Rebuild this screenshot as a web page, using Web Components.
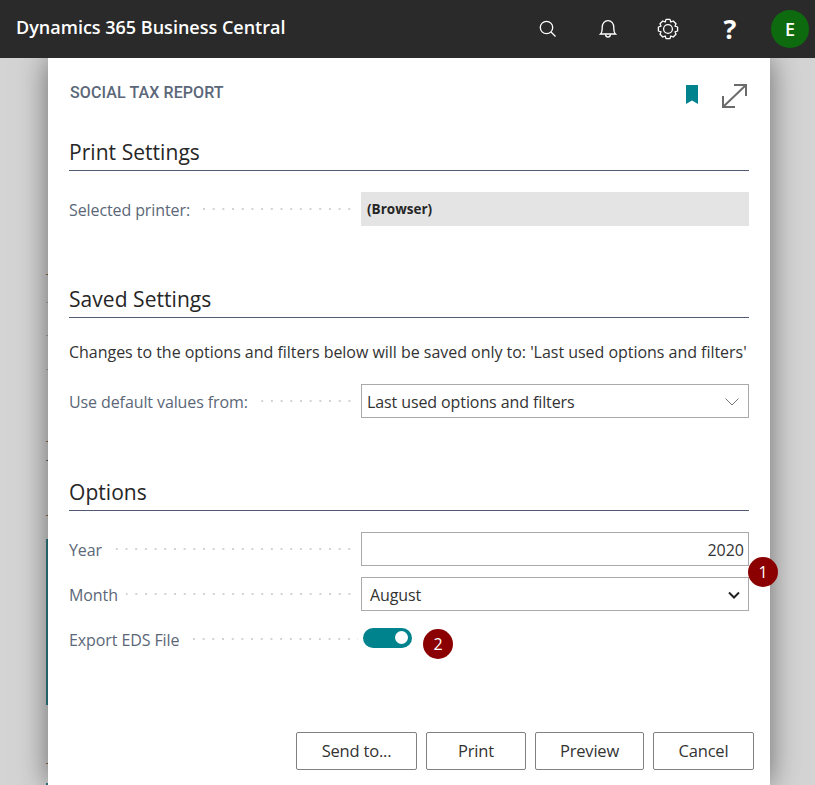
<!DOCTYPE html>
<html lang="en">
<head>
<meta charset="utf-8">
<title>Social Tax Report</title>
<style>
    html, body { margin: 0; height: 100%; }
    body {
        background: #d4d4d4;
        overflow: hidden;
        font-family: "Open Sans", "Noto Sans", sans-serif;
        color: #333;
    }
</style>
</head>
<body>
<bc-header>Dynamics 365 Business Central</bc-header>
<bc-backdrop></bc-backdrop>
<bc-dialog heading="SOCIAL TAX REPORT">
    <bc-section heading="Print Settings">
        <bc-field label="Selected printer:"><bc-readonly>(Browser)</bc-readonly></bc-field>
    </bc-section>
    <bc-section heading="Saved Settings" style="margin-bottom:56px">
        <p slot="intro">Changes to the options and filters below will be saved only to: 'Last used options and filters'</p>
        <bc-field label="Use default values from:"><bc-select kind="light" pad="6">Last used options and filters</bc-select></bc-field>
    </bc-section>
    <bc-section heading="Options">
        <bc-field label="Year"><bc-input>2020</bc-input></bc-field>
        <bc-field label="Month"><bc-select kind="dark" pad="9">August</bc-select></bc-field>
        <bc-field label="Export EDS File"><bc-toggle></bc-toggle></bc-field>
    </bc-section>
    <bc-button slot="actions" w="121">Send to...</bc-button>
    <bc-button slot="actions" w="100">Print</bc-button>
    <bc-button slot="actions" w="109">Preview</bc-button>
    <bc-button slot="actions" w="101">Cancel</bc-button>
</bc-dialog>
<bc-badge style="left:748px;top:557px">1</bc-badge>
<bc-badge style="left:423px;top:629px">2</bc-badge>

<script>
class BcHeader extends HTMLElement {
    constructor() {
        super();
        this.attachShadow({ mode: 'open' });
    }

    connectedCallback() {
        this.shadowRoot.innerHTML = `
            <style>
                :host {
                    display: flex;
                    align-items: center;
                    position: relative;
                    z-index: 3;
                    height: 58px;
                    padding: 0 6px 0 16px;
                    background: #2a2a2a;
                    color: #fff;
                }
                .title {
                    flex: 1;
                    font-size: 18px;
                    font-weight: 600;
                    margin-top: -4px;
                }
                .icons { display: flex; align-items: center; }
                svg { display: block; fill: none; stroke: #fff; stroke-width: 1.3; }
                .q {
                    width: 20px;
                    margin: -2px 31px 0 41px;
                    text-align: center;
                    font: 700 27px "Open Sans", sans-serif;
                }
                .avatar {
                    width: 38px;
                    height: 38px;
                    border-radius: 50%;
                    background: #0e6a0e;
                    font-size: 18px;
                    font-weight: 600;
                    line-height: 38px;
                    text-align: center;
                }
            </style>
            <div class="title"><slot></slot></div>
            <div class="icons">
                <svg width="20" height="20" viewBox="0 0 20 20" style="margin-right:41px">
                    <circle cx="8.5" cy="8.5" r="6.2"/><path d="M13 13 L17.5 17.5"/>
                </svg>
                <svg width="18" height="20" viewBox="0 0 18 20" style="margin-right:40px">
                    <path d="M1.5 15 C3.4 13.4 3.2 11 3.2 8.5 C3.2 4.6 5.4 1.6 9 1.6 C12.6 1.6 14.8 4.6 14.8 8.5 C14.8 11 14.6 13.4 16.5 15 Z"/>
                    <path d="M6.6 15.4 C6.8 19 11.2 19 11.4 15.4"/>
                </svg>
                <svg width="22" height="22" viewBox="0 0 22 22">
                    <circle cx="11" cy="11" r="4.4"/>
                    <path d="M9 1.4 H13 L13.8 4 L16.2 3 L19 5.8 L18 8.2 L20.6 9 V13 L18 13.8 L19 16.2 L16.2 19 L13.8 18 L13 20.6 H9 L8.2 18 L5.8 19 L3 16.2 L4 13.8 L1.4 13 V9 L4 8.2 L3 5.8 L5.8 3 L8.2 4 Z" stroke-linejoin="round"/>
                </svg>
                <div class="q">?</div>
                <div class="avatar">E</div>
            </div>
        `;
    }
}

// what shows of the page behind the dialog
class BcBackdrop extends HTMLElement {
    constructor() {
        super();
        this.attachShadow({ mode: 'open' });
    }

    connectedCallback() {
        const specks = [[274, '#8a6a3a'], [302, '#a8a8a8'], [335, '#a8a8a8'], [369, '#a8a8a8'], [441, '#8a6a3a'], [460, '#667'], [515, '#8a6a3a'], [763, '#8a6a3a']];
        this.shadowRoot.innerHTML = `
            <style>
                :host { position: absolute; left: 46px; top: 0; width: 2px; height: 785px; }
                i { position: absolute; left: 0; width: 2px; height: 1px; }
                .bar { top: 539px; height: 166px; background: #2f7f86; }
                .low { top: 783px; height: 2px; background: #2f7f86; }
            </style>
            <i class="bar"></i><i class="low"></i>
            ${specks.map(s => `<i style="top:${s[0]}px;background:${s[1]}"></i>`).join('')}
        `;
    }
}

class BcDialog extends HTMLElement {
    constructor() {
        super();
        this.attachShadow({ mode: 'open' });
    }

    connectedCallback() {
        this.shadowRoot.innerHTML = `
            <style>
                :host {
                    display: flex;
                    flex-direction: column;
                    position: relative;
                    z-index: 2;
                    box-sizing: border-box;
                    width: 722px;
                    height: 727px;
                    margin-left: 48px;
                    padding: 22px 21px 15px 21px;
                    background: #fff;
                    box-shadow: 0 0 28px rgba(0, 0, 0, 0.5);
                }
                .top {
                    display: flex;
                    align-items: center;
                    height: 24px;
                    margin-bottom: 30px;
                }
                h1 {
                    flex: 1;
                    margin: 1px 0 0 1px;
                    font: 500 16px Roboto, sans-serif;
                    letter-spacing: 0.1px;
                    color: #5b6778;
                }
                svg { display: block; }
                .body { flex: 1; }
                .actions {
                    display: flex;
                    justify-content: flex-end;
                    gap: 9px;
                    margin-right: -5px;
                }
            </style>
            <div class="top">
                <h1>${this.getAttribute('heading')}</h1>
                <svg width="12" height="19" viewBox="0 0 12 19" style="margin:5px 24px 0 0">
                    <path d="M0 0 H12 V19 L6 15.5 L0 19 Z" fill="#00838c"/>
                </svg>
                <svg width="25" height="24" viewBox="0 0 25 24" style="margin:8px 2px 0 0" fill="none" stroke="#6b6b6b" stroke-width="2">
                    <path d="M1 23 L24 1 M12 1 H24 V12 M1 12 V23 H13"/>
                </svg>
            </div>
            <div class="body"><slot></slot></div>
            <div class="actions"><slot name="actions"></slot></div>
        `;
    }
}

class BcSection extends HTMLElement {
    constructor() {
        super();
        this.attachShadow({ mode: 'open' });
    }

    connectedCallback() {
        this.shadowRoot.innerHTML = `
            <style>
                :host { display: block; margin-bottom: 55px; }
                h2 {
                    box-sizing: border-box;
                    height: 37px;
                    margin: 0 0 21px;
                    border-bottom: 1px solid #505a70;
                    font-size: 21px;
                    font-weight: 400;
                    line-height: 36px;
                    letter-spacing: 0.05px;
                    color: #262626;
                }
                ::slotted(p) {
                    margin: 24px 0 22px;
                    font-size: 16px;
                    line-height: 20px;
                    letter-spacing: -0.03px;
                    white-space: nowrap;
                }
            </style>
            <h2>${this.getAttribute('heading')}</h2>
            <slot name="intro"></slot>
            <slot></slot>
        `;
    }
}

class BcField extends HTMLElement {
    constructor() {
        super();
        this.attachShadow({ mode: 'open' });
    }

    connectedCallback() {
        this.shadowRoot.innerHTML = `
            <style>
                :host {
                    display: grid;
                    grid-template-columns: 292px 388px;
                    height: 34px;
                    margin-bottom: 11px;
                    align-items: center;
                }
                .label {
                    display: flex;
                    align-items: center;
                    height: 100%;
                    padding-right: 3px;
                    box-sizing: border-box;
                }
                span {
                    margin-top: 2px;
                    font-size: 16px;
                    letter-spacing: -0.1px;
                    color: #5b6778;
                    white-space: nowrap;
                }
                .dots {
                    flex: 1;
                    height: 2px;
                    margin-left: 8px;
                    background: radial-gradient(circle at 1px 1px, #d2d2d2 1px, transparent 1.1px) right center / 9.7px 2px repeat-x;
                }
            </style>
            <div class="label"><span>${this.getAttribute('label')}</span><div class="dots"></div></div>
            <slot></slot>
        `;
    }
}

class BcReadonly extends HTMLElement {
    constructor() {
        super();
        this.attachShadow({ mode: 'open' });
    }

    connectedCallback() {
        this.shadowRoot.innerHTML = `
            <style>
                :host {
                    display: block;
                    box-sizing: border-box;
                    height: 34px;
                    padding-left: 6px;
                    background: #e4e4e4;
                    font-size: 13.5px;
                    font-weight: 700;
                    line-height: 34px;
                    color: #262626;
                }
            </style>
            <slot></slot>
        `;
    }
}

class BcInput extends HTMLElement {
    constructor() {
        super();
        this.attachShadow({ mode: 'open' });
    }

    connectedCallback() {
        this.shadowRoot.innerHTML = `
            <style>
                :host {
                    display: block;
                    box-sizing: border-box;
                    height: 34px;
                    padding-right: 4px;
                    border: 1px solid #aaa;
                    font-size: 16px;
                    line-height: 34px;
                    text-align: right;
                    color: #333;
                }
            </style>
            <slot></slot>
        `;
    }
}

class BcSelect extends HTMLElement {
    constructor() {
        super();
        this.attachShadow({ mode: 'open' });
    }

    connectedCallback() {
        const dark = this.getAttribute('kind') === 'dark';
        this.shadowRoot.innerHTML = `
            <style>
                :host {
                    display: flex;
                    align-items: center;
                    justify-content: space-between;
                    box-sizing: border-box;
                    height: 34px;
                    padding: 1px ${dark ? 8 : 9}px 0 ${this.getAttribute('pad') - 1}px;
                    border: 1px solid #aaa;
                    font-size: 16px;
                    letter-spacing: -0.1px;
                    color: #333;
                }
                svg { display: block; fill: none; }
            </style>
            <slot></slot>
            ${dark
                ? '<svg width="12" height="8" viewBox="0 0 12 8" stroke="#222" stroke-width="2"><path d="M1 1.5 L6 6.5 L11 1.5"/></svg>'
                : '<svg width="14" height="8" viewBox="0 0 14 8" stroke="#777" stroke-width="1"><path d="M0.5 0.5 L7 7 L13.5 0.5"/></svg>'}
        `;
    }
}

class BcToggle extends HTMLElement {
    constructor() {
        super();
        this.attachShadow({ mode: 'open' });
    }

    connectedCallback() {
        this.shadowRoot.innerHTML = `
            <style>
                :host {
                    display: block;
                    box-sizing: border-box;
                    width: 49px;
                    height: 20px;
                    margin: 0 0 2px 2px;
                    padding: 3px 4px 0 0;
                    border-radius: 10px;
                    background: #00838c;
                }
                i {
                    display: block;
                    width: 13px;
                    height: 13px;
                    margin-left: auto;
                    border-radius: 50%;
                    background: #fff;
                }
            </style>
            <i></i>
        `;
    }
}

class BcButton extends HTMLElement {
    constructor() {
        super();
        this.attachShadow({ mode: 'open' });
    }

    connectedCallback() {
        this.shadowRoot.innerHTML = `
            <style>
                :host {
                    display: block;
                    box-sizing: border-box;
                    width: ${this.getAttribute('w')}px;
                    height: 38px;
                    border: 1px solid #808080;
                    border-radius: 2px;
                    background: #fff;
                    font-size: 16.5px;
                    line-height: 36px;
                    letter-spacing: -0.2px;
                    text-align: center;
                    color: #333;
                }
            </style>
            <slot></slot>
        `;
    }
}

class BcBadge extends HTMLElement {
    constructor() {
        super();
        this.attachShadow({ mode: 'open' });
    }

    connectedCallback() {
        this.shadowRoot.innerHTML = `
            <style>
                :host {
                    position: absolute;
                    z-index: 4;
                    width: 30px;
                    height: 30px;
                    border-radius: 50%;
                    background: #8b0000;
                    color: #fff;
                    font-size: 16px;
                    line-height: 30px;
                    text-align: center;
                }
            </style>
            <slot></slot>
        `;
    }
}

customElements.define('bc-header', BcHeader);
customElements.define('bc-backdrop', BcBackdrop);
customElements.define('bc-dialog', BcDialog);
customElements.define('bc-section', BcSection);
customElements.define('bc-field', BcField);
customElements.define('bc-readonly', BcReadonly);
customElements.define('bc-input', BcInput);
customElements.define('bc-select', BcSelect);
customElements.define('bc-toggle', BcToggle);
customElements.define('bc-button', BcButton);
customElements.define('bc-badge', BcBadge);
</script>
</body>
</html>
